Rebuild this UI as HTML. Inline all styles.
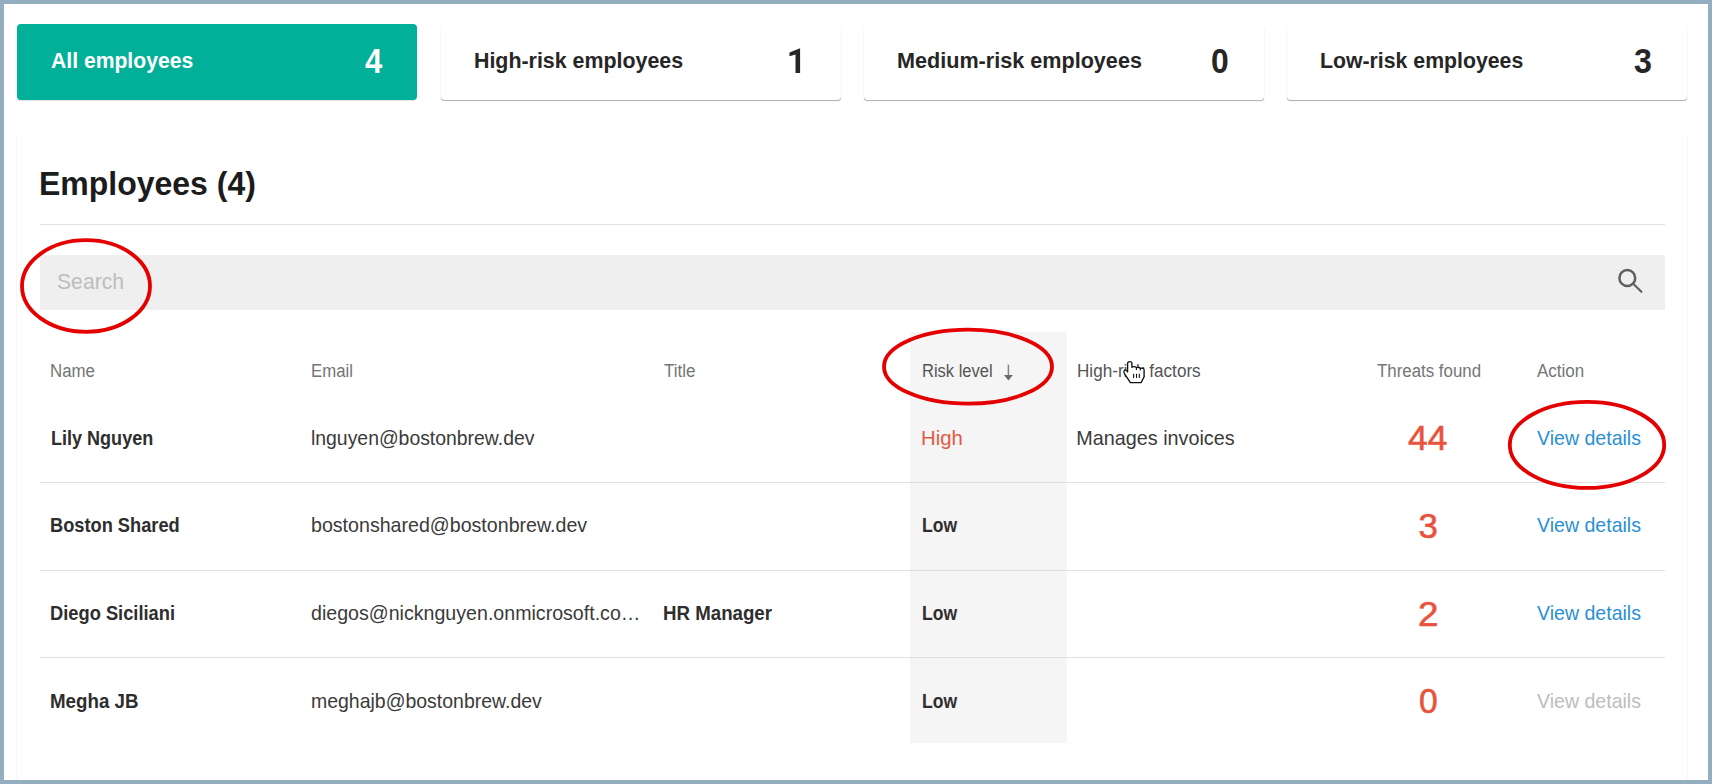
<!DOCTYPE html>
<html>
<head>
<meta charset="utf-8">
<style>
html,body{margin:0;padding:0;}
body{width:1712px;height:784px;background:#93afbf;position:relative;overflow:hidden;font-family:"Liberation Sans",sans-serif;}
.page{position:absolute;left:4px;top:4px;width:1704px;height:776px;background:#ffffff;}
.card{position:absolute;top:24px;height:76px;width:400px;border-radius:4px;background:#fff;box-shadow:0 1.5px 1px -0.5px rgba(0,0,0,0.32),0 0 1px rgba(0,0,0,0.05);}
.card.active{background:#02af99;box-shadow:0 1px 1px rgba(0,0,0,0.12);}
.main{position:absolute;left:16px;top:134px;width:1670px;height:646px;background:#fff;border-left:1px solid #f6f6f6;border-right:1px solid #f6f6f6;}
.t{position:absolute;white-space:nowrap;line-height:1;transform-origin:0 0;}
.hr{position:absolute;height:1px;background:#e0e0e0;}
</style>
</head>
<body>
<div class="page"></div>
<div class="card active" style="left:17px;"></div>
<div class="card" style="left:441px;"></div>
<div class="card" style="left:864px;"></div>
<div class="card" style="left:1287px;"></div>
<div class="main"></div>
<div class="hr" style="left:40px;top:224px;width:1625px;"></div>
<div style="position:absolute;left:40px;top:254.5px;width:1625px;height:55px;background:#efefef;"></div>
<svg style="position:absolute;left:1614px;top:266px;" width="32" height="32" viewBox="0 0 32 32"><circle cx="13.3" cy="12" r="7.9" fill="none" stroke="#5f5f5f" stroke-width="2.5"/><line x1="19.2" y1="17.8" x2="27.4" y2="25.8" stroke="#5f5f5f" stroke-width="2.1" stroke-linecap="round"/></svg>
<div style="position:absolute;left:910px;top:332px;width:157px;height:411px;background:#f5f5f5;"></div>
<div class="hr" style="left:40px;top:482px;width:1625px;"></div>
<div class="hr" style="left:40px;top:570px;width:1625px;"></div>
<div class="hr" style="left:40px;top:657px;width:1625px;"></div>
<svg style="position:absolute;left:1002px;top:363px;" width="13" height="19" viewBox="0 0 13 19"><line x1="6.4" y1="1.6" x2="6.4" y2="13" stroke="#858585" stroke-width="1.5"/><path d="M2 12.1 L10.9 12.1 L6.4 17.4 Z" fill="#6a6a6a"/></svg>
<div class="t" style="left:50.54px;top:49.98px;font-size:22.0px;color:#ffffff;font-weight:700;transform:scaleX(0.9610);">All employees</div>
<div class="t" style="left:473.53px;top:49.98px;font-size:22.0px;color:#262626;font-weight:700;transform:scaleX(0.9715);">High-risk employees</div>
<div class="t" style="left:896.72px;top:49.98px;font-size:22.0px;color:#262626;font-weight:700;transform:scaleX(0.9819);">Medium-risk employees</div>
<div class="t" style="left:1319.53px;top:49.98px;font-size:22.0px;color:#262626;font-weight:700;transform:scaleX(0.9665);">Low-risk employees</div>
<div class="t" style="left:365.00px;top:43.50px;font-size:34.5px;color:#ffffff;font-weight:700;transform:scaleX(0.9000);">4</div>
<div class="t" style="left:1211.08px;top:43.50px;font-size:34.5px;color:#262626;font-weight:700;transform:scaleX(0.9235);">0</div>
<div class="t" style="left:1633.66px;top:43.50px;font-size:34.5px;color:#262626;font-weight:700;transform:scaleX(0.9353);">3</div>
<div class="t" style="left:39.09px;top:166.96px;font-size:33.6px;color:#1c1c1c;font-weight:700;transform:scaleX(0.9527);">Employees (4)</div>
<div class="t" style="left:56.62px;top:271.80px;font-size:21.5px;color:#bdbdbd;font-weight:400;transform:scaleX(0.9848);">Search</div>
<div class="t" style="left:50.44px;top:362.70px;font-size:17.6px;color:#757575;font-weight:400;transform:scaleX(0.9578);">Name</div>
<div class="t" style="left:310.55px;top:362.70px;font-size:17.6px;color:#757575;font-weight:400;transform:scaleX(0.9524);">Email</div>
<div class="t" style="left:664.10px;top:362.70px;font-size:17.6px;color:#757575;font-weight:400;transform:scaleX(0.9656);">Title</div>
<div class="t" style="left:921.86px;top:362.70px;font-size:17.6px;color:#555555;font-weight:400;transform:scaleX(0.9384);">Risk level</div>
<div class="t" style="left:1076.93px;top:362.70px;font-size:17.6px;color:#555555;font-weight:400;transform:scaleX(0.9730);">High-risk factors</div>
<div class="t" style="left:1376.50px;top:362.70px;font-size:17.6px;color:#757575;font-weight:400;transform:scaleX(0.9583);">Threats found</div>
<div class="t" style="left:1536.80px;top:362.70px;font-size:17.6px;color:#757575;font-weight:400;transform:scaleX(0.9667);">Action</div>
<div class="t" style="left:50.59px;top:428.54px;font-size:19.8px;color:#2e2e2e;font-weight:700;transform:scaleX(0.9118);">Lily Nguyen</div>
<div class="t" style="left:311.02px;top:428.54px;font-size:19.8px;color:#3a3a3a;font-weight:400;transform:scaleX(0.9802);">lnguyen@bostonbrew.dev</div>
<div class="t" style="left:920.94px;top:428.54px;font-size:19.8px;color:#e35a43;font-weight:400;transform:scaleX(1.0289);">High</div>
<div class="t" style="left:1076.30px;top:428.54px;font-size:19.8px;color:#3a3a3a;font-weight:400;transform:scaleX(1.0000);">Manages invoices</div>
<div class="t" style="left:1408.28px;top:421.34px;font-size:34.8px;color:#e9523c;font-weight:400;transform:scaleX(1.0162);-webkit-text-stroke:0.6px #e9523c;">44</div>
<div class="t" style="left:1536.90px;top:428.54px;font-size:19.8px;color:#2b90d4;font-weight:400;transform:scaleX(0.9886);">View details</div>
<div class="t" style="left:50.28px;top:516.34px;font-size:19.8px;color:#2e2e2e;font-weight:700;transform:scaleX(0.9217);">Boston Shared</div>
<div class="t" style="left:310.61px;top:516.34px;font-size:19.8px;color:#3a3a3a;font-weight:400;transform:scaleX(0.9914);">bostonshared@bostonbrew.dev</div>
<div class="t" style="left:922.11px;top:516.34px;font-size:19.8px;color:#2e2e2e;font-weight:700;transform:scaleX(0.8872);">Low</div>
<div class="t" style="left:1418.50px;top:509.14px;font-size:34.8px;color:#e9523c;font-weight:400;transform:scaleX(1.0000);-webkit-text-stroke:0.6px #e9523c;">3</div>
<div class="t" style="left:1536.90px;top:516.34px;font-size:19.8px;color:#2b90d4;font-weight:400;transform:scaleX(0.9886);">View details</div>
<div class="t" style="left:50.28px;top:603.94px;font-size:19.8px;color:#2e2e2e;font-weight:700;transform:scaleX(0.9248);">Diego Siciliani</div>
<div class="t" style="left:310.61px;top:603.94px;font-size:19.8px;color:#3a3a3a;font-weight:400;transform:scaleX(0.9912);">diegos@nicknguyen.onmicrosoft.co…</div>
<div class="t" style="left:663.16px;top:603.94px;font-size:19.8px;color:#2e2e2e;font-weight:700;transform:scaleX(0.9447);">HR Manager</div>
<div class="t" style="left:922.11px;top:603.94px;font-size:19.8px;color:#2e2e2e;font-weight:700;transform:scaleX(0.8872);">Low</div>
<div class="t" style="left:1417.99px;top:596.74px;font-size:34.8px;color:#e9523c;font-weight:400;transform:scaleX(1.0563);-webkit-text-stroke:0.6px #e9523c;">2</div>
<div class="t" style="left:1536.90px;top:603.94px;font-size:19.8px;color:#2b90d4;font-weight:400;transform:scaleX(0.9886);">View details</div>
<div class="t" style="left:50.25px;top:691.54px;font-size:19.8px;color:#2e2e2e;font-weight:700;transform:scaleX(0.9467);">Megha JB</div>
<div class="t" style="left:310.62px;top:691.54px;font-size:19.8px;color:#3a3a3a;font-weight:400;transform:scaleX(0.9842);">meghajb@bostonbrew.dev</div>
<div class="t" style="left:922.11px;top:691.54px;font-size:19.8px;color:#2e2e2e;font-weight:700;transform:scaleX(0.8872);">Low</div>
<div class="t" style="left:1419.14px;top:684.34px;font-size:34.8px;color:#e9523c;font-weight:400;transform:scaleX(0.9647);-webkit-text-stroke:0.6px #e9523c;">0</div>
<div class="t" style="left:1536.90px;top:691.54px;font-size:19.8px;color:#bdbdbd;font-weight:400;transform:scaleX(0.9886);">View details</div>
<svg style="position:absolute;left:0;top:0;" width="1712" height="784" viewBox="0 0 1712 784">
<path d="M800.1 48.6 L800.1 73 L795.5 73 L795.5 54.4 L789.5 56.3 L789.5 52.5 L799.3 48.6 Z" fill="#262626"/>
<ellipse cx="86" cy="286" rx="64" ry="45.8" fill="none" stroke="#e40000" stroke-width="3.8"/>
<ellipse cx="968" cy="366.7" rx="84" ry="37" fill="none" stroke="#e40000" stroke-width="3.8"/>
<ellipse cx="1587" cy="444.9" rx="77.2" ry="43" fill="none" stroke="#e40000" stroke-width="3.8"/>
</svg>
<svg style="position:absolute;left:1118px;top:356px;" width="32" height="32" viewBox="0 0 32 32">
<path d="M9.6 16 L9.6 7.6 Q9.6 5.6 11.8 5.6 Q13.9 5.6 13.9 7.6 L13.9 11.2 Q15.2 10.4 16.6 10.6 Q18 10.8 18.4 11.6 Q19.6 11.1 21 11.5 Q22 11.8 22.3 12.4 Q23.6 11.9 25 12.3 Q26.1 12.7 26.1 13.8 L26.1 20.8 L23.1 26.6 L12.4 26.6 L6.4 17.6 Q5.2 15.6 6.6 14.3 Q8 13.3 9.6 16 Z" fill="#fff" stroke="#111" stroke-width="1.35" stroke-linejoin="round"/>
<path d="M18.4 11.6 L18.4 14 M22.3 12.4 L22.3 14.4 M15.6 17.8 L15.6 22 M18.5 17.8 L18.5 22 M21.3 17.8 L21.3 22" stroke="#111" stroke-width="1.1" fill="none"/>
</svg>
</body>
</html>
